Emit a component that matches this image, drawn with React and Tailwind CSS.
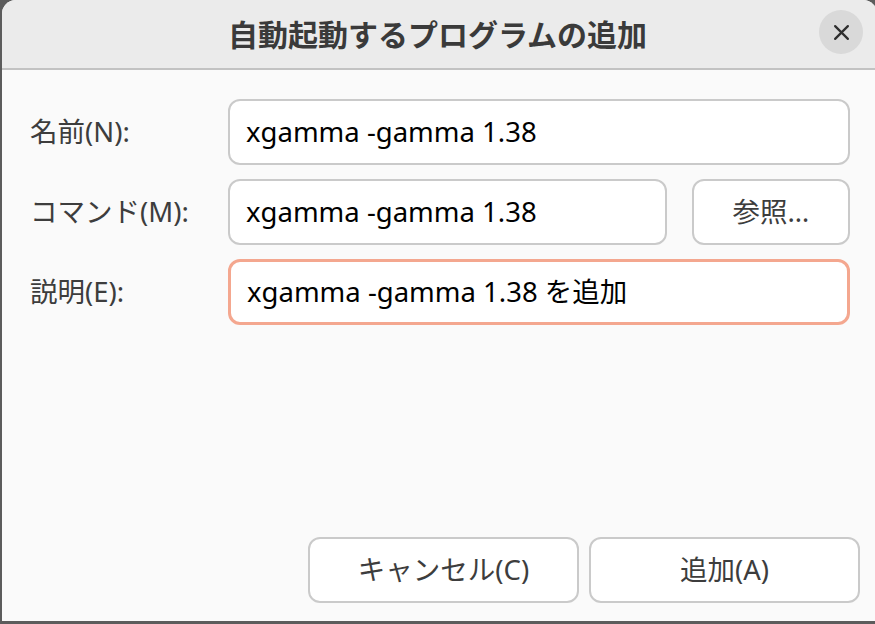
import React from "react";

const font = { fontFamily: '"Noto Sans", "Noto Sans CJK JP", sans-serif' };

function Field({ label, value, focused, right }) {
  return (
    <div className="flex items-center h-[66px]">
      <div className="w-[198px] text-[27.5px] text-[#3d3d3d]">{label}</div>
      <div className="flex flex-1 gap-[25px]">
        <div
          className={
            "flex-1 h-[66px] rounded-[12px] bg-white flex items-center pl-[16px] text-[27.5px] text-black " +
            (focused ? "border-[3px] border-[#f4a78f]" : "border-[2px] border-[#cacaca]")
          }
        >
          {value}
        </div>
        {right}
      </div>
    </div>
  );
}

export default function App() {
  return (
    <div className="w-[875px] h-[624px] bg-[#5c5c5c] overflow-hidden" style={font}>
      <div className="ml-[2px] w-[875px] h-[621px] rounded-t-[14px] bg-[#fafafa] flex flex-col overflow-hidden">
        <div className="h-[70px] shrink-0 bg-[#ebebeb] border-b-[2px] border-[#c2c2c2] relative flex items-center justify-center">
          <div className="text-[30px] font-bold text-[#3a3a3a] pr-[4px]">自動起動するプログラムの追加</div>
          <div className="absolute left-[817px] top-[10px] w-[44px] h-[44px] rounded-full bg-[#d9d9d9] flex items-center justify-center">
            <svg width="17" height="17" viewBox="0 0 16 16">
              <path d="M2 2 L14 14 M14 2 L2 14" stroke="#2e2e2e" strokeWidth="2.1" strokeLinecap="round" />
            </svg>
          </div>
        </div>
        <div className="flex-1 flex flex-col pl-[28px] pr-[27px] pt-[29px] gap-[14px]">
          <Field label="名前(N):" value="xgamma -gamma 1.38" />
          <Field
            label="コマンド(M):"
            value="xgamma -gamma 1.38"
            right={
              <div className="w-[158px] h-[66px] rounded-[12px] border-[2px] border-[#cacaca] bg-white flex items-center justify-center text-[27.5px] text-[#3d3d3d]">
                参照…
              </div>
            }
          />
          <Field label="説明(E):" value="xgamma -gamma 1.38 を追加" focused />
        </div>
        <div className="flex justify-end gap-[10px] pr-[17px] pb-[18px]">
          <div className="w-[271px] h-[66px] rounded-[12px] border-[2px] border-[#cacaca] bg-white flex items-center justify-center text-[27.5px] text-[#3d3d3d]">
            キャンセル(C)
          </div>
          <div className="w-[271px] h-[66px] rounded-[12px] border-[2px] border-[#cacaca] bg-white flex items-center justify-center text-[27.5px] text-[#3d3d3d]">
            追加(A)
          </div>
        </div>
      </div>
    </div>
  );
}
